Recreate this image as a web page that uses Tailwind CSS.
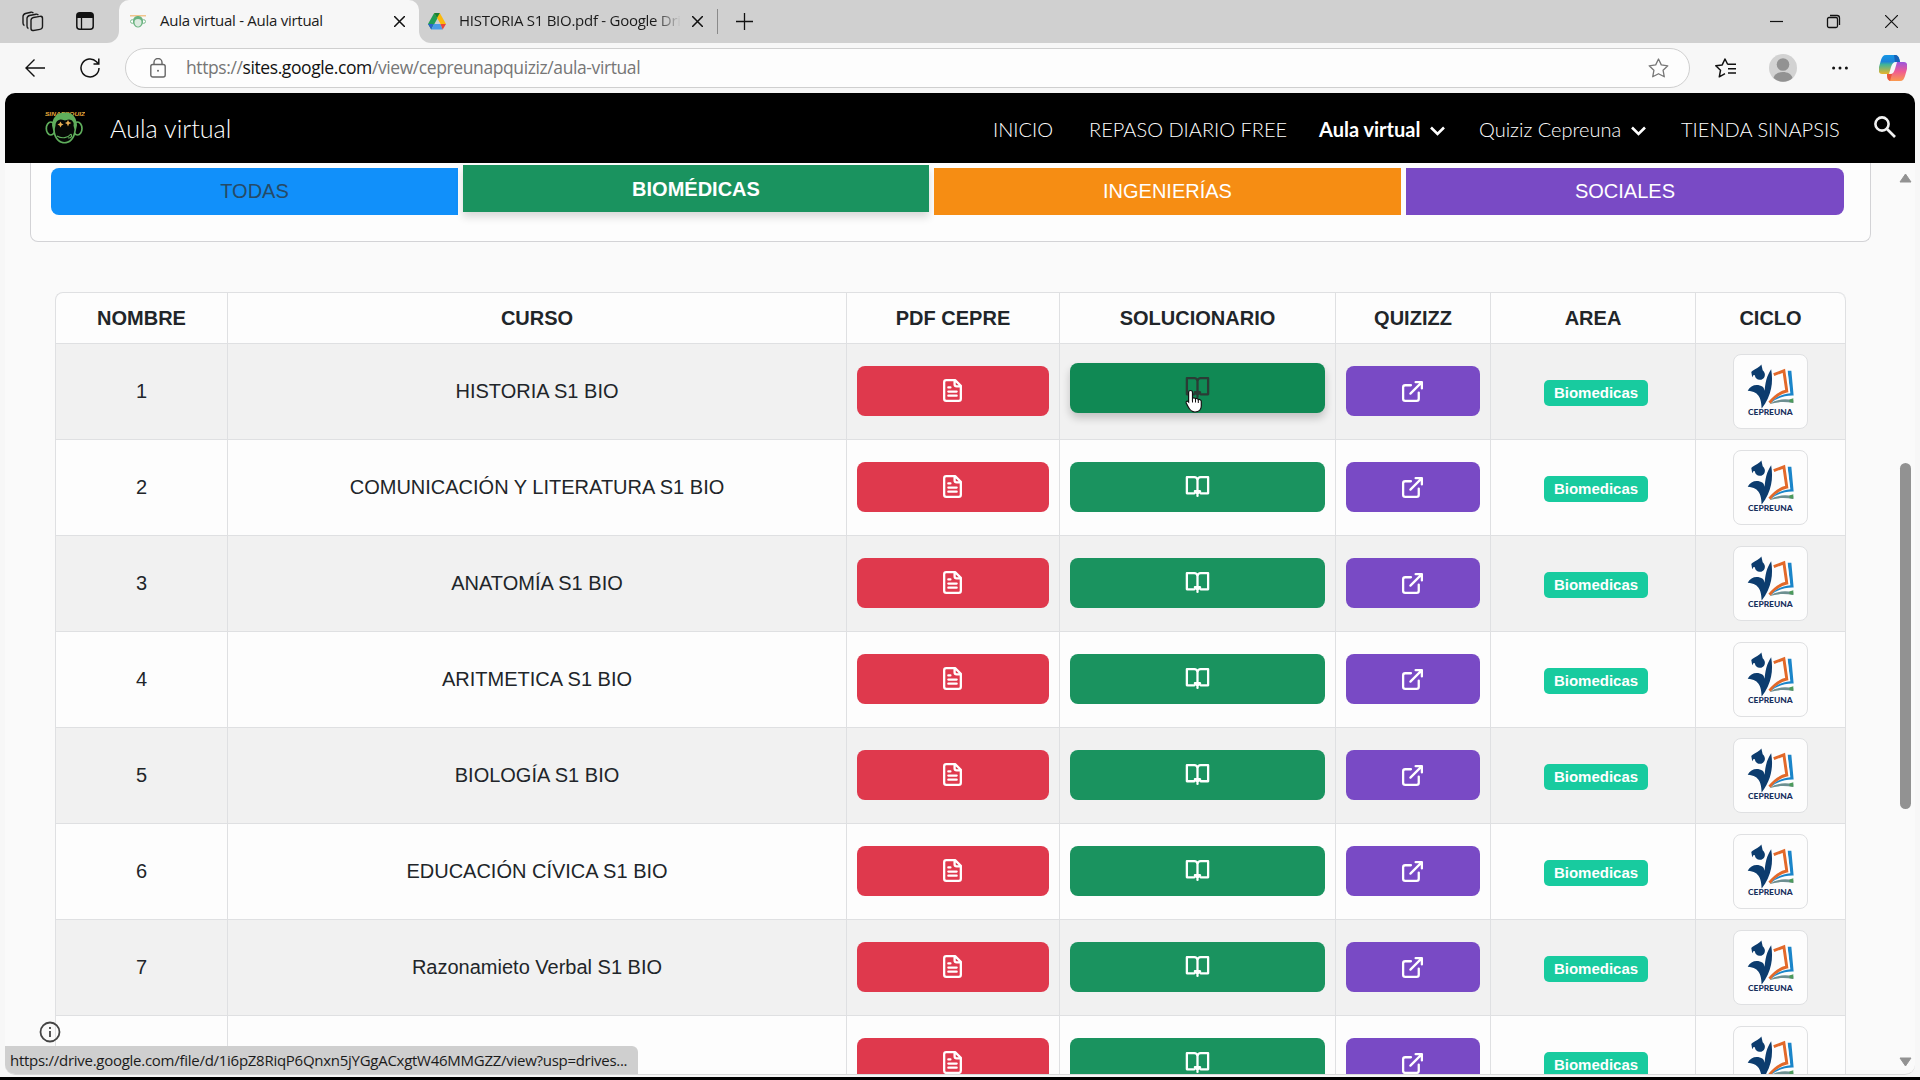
<!DOCTYPE html>
<html lang="es">
<head>
<meta charset="utf-8">
<title>Aula virtual - Aula virtual</title>
<script src="https://cdn.jsdelivr.net/npm/@tailwindcss/browser@4"></script>
</head>
<body class="w-[1920px] h-[1080px] overflow-hidden bg-[#f7f7f7] flex flex-col font-['Open_Sans',sans-serif] text-[#1b1b1b]">
<svg class="hidden">
  <symbol id="file" viewBox="0 0 24 24"><path d="M14.5 2H6a2 2 0 0 0-2 2v16a2 2 0 0 0 2 2h12a2 2 0 0 0 2-2V7.5L14.5 2zM14 2v4a2 2 0 0 0 2 2h4M10 9H8M16 13H8M16 17H8"/></symbol>
  <symbol id="book" viewBox="0 0 24 24"><path d="M12 21V6a3 3 0 0 0-3-3H1.800v15.500H9M12 6a3 3 0 0 1 3-3h7.200v15.500H15M9.500 16.500l2.500 2.500 2.500-2.500z"/></symbol>
  <symbol id="ext" viewBox="0 0 24 24"><path d="M18 13v6a2 2 0 0 1-2 2H5a2 2 0 0 1-2-2V8a2 2 0 0 1 2-2h5.500M15 3h6v6M10 14L21 3"/></symbol>
  <symbol id="drive" viewBox="0 0 18 17"><path d="M6.200 0H9L9.400 5.500 3.300 16.500 0 11z" fill="#1f9d55"/><path d="M6.200 0h5.600l6.200 11h-5.400z" fill="#fbb90c"/><path d="M6.200 0h5.600L9 5z" fill="#188038"/><path d="M3.300 16.500 0 11h5.400z" fill="#2b62c9"/><path d="M3.300 16.500 5.800 11h6.600l2.300 5.500z" fill="#4a9be8"/><path d="M12.400 11H18l-3.300 5.500z" fill="#e8453c"/></symbol>
  <symbol id="cepre" viewBox="100 42 224 223">
    <path d="M153 94c8-8 20-10 31-23l4 17c9 8 9 20 1 26-9 7-24 4-25-10l-4-1-4 7z" fill="#0c3c6e"/>
    <path d="M142 151c9-17 29-22 46-12 3 3 5 8 6 12 2-22 5-44 20-66 7 40 2 80-29 121-1-24-4-53-43-55z" fill="#0c3c6e"/>
    <path d="M222 102 253 90l9 62c-19 4-37 16-53 36" fill="none" stroke="#e2692a" stroke-width="9"/>
    <path d="M264 90l12 0 7 76c-25-1-50 7-68 21 14-18 34-26 58-28z" fill="#1b85c9"/>
    <path d="M263 88l7 66" stroke="#fff" stroke-width="2.500"/>
    <path d="M208 193c20-16 46-18 74-13v9c-27-5-50-4-74 4z" fill="#6d8f91"/><path d="M270 178l12-4v14l-12-2z" fill="#4c9a5b"/>
    <text x="211.500" y="225" text-anchor="middle" textLength="137" lengthAdjust="spacingAndGlyphs" font-family="Lato" font-weight="900" font-size="24" fill="#17305e">CEPREUNA</text>
  </symbol>
</svg>

<!-- tab strip -->
<div class="h-[43px] shrink-0 bg-[#f7f7f7] flex relative">
  <div class="w-[119px] bg-[#d0d0d0] rounded-br-[12px] flex items-center pl-[22px] gap-[32px]">
    <svg class="w-[22px] h-[22px]" viewBox="0 0 22 22" fill="none" stroke="#1b1b1b" stroke-width="1.400"><rect x="9" y="5.500" width="11.500" height="13" rx="2.500" transform="skewY(-10) translate(0 3)"/><path d="M6.500 17.500C5 17 5 16 5 15V7.500C5 6 6 5 7.500 4.500L14 3.200c1-.2 2 .2 2.300 1M2.500 14.500C1 14 1 13 1 12V5.500C1 4 2 3 3.500 2.500L9 1.200c1-.2 2 .2 2.300 1"/></svg>
    <svg class="w-[18px] h-[18px] -mt-px" viewBox="0 0 18 18"><rect x=".8" y=".8" width="16.400" height="16.400" rx="3" fill="none" stroke="#111" stroke-width="1.500"/><path d="M1 6V3a2 2 0 0 1 2-2h12a2 2 0 0 1 2 2v3z" fill="#111"/><path d="M5.500 5v12" stroke="#111" stroke-width="1.300"/></svg>
  </div>
  <div class="w-[300px] bg-[#d0d0d0]"><div class="w-full h-full bg-[#f7f7f7] rounded-t-[10px] flex items-center pl-[11px] pr-[14px]">
    <svg class="w-4 h-[13px] mr-[14px]" viewBox="0 0 16 13"><path d="M0 0h16v1.500H0z" fill="#f1c58d"/><circle cx="2.300" cy="6.500" r="1.800" fill="#fff" stroke="#78b98c"/><circle cx="13.700" cy="6.500" r="1.800" fill="#fff" stroke="#78b98c"/><path d="M3 6c0-4 3-5 5-5s5 1 5 5v2c-1 3-3 4.500-5 4.500S4 11 3 8z" fill="#6bb380"/><path d="M4.500 7c0-2 1.200-3 3.500-3s3.500 1 3.500 3-1 4.500-3.500 4.500S4.500 9 4.500 7z" fill="#dcebe0"/></svg>
    <span class="text-[15px] tracking-[-0.27px] whitespace-nowrap -mt-[3px]">Aula virtual - Aula virtual</span>
    <svg class="w-[11px] h-[11px] ml-auto" viewBox="0 0 10 10" stroke="#111" stroke-width="1.400"><path d="M0 0l10 10M10 0L0 10"/></svg>
  </div></div>
  <div class="flex-1 bg-[#d0d0d0] rounded-bl-[12px] flex items-center pl-[9px]">
    <svg class="w-[18px] h-[17px] mr-[13px]"><use href="#drive"/></svg>
    <div class="w-[222px] overflow-hidden [mask-image:linear-gradient(90deg,#000_88%,transparent)] -mt-[3px]"><span class="text-[15px] tracking-[-0.27px] whitespace-nowrap">HISTORIA S1 BIO.pdf - Google Drive</span></div>
    <svg class="w-[11px] h-[11px] ml-[11px]" viewBox="0 0 10 10" stroke="#111" stroke-width="1.400"><path d="M0 0l10 10M10 0L0 10"/></svg>
    <div class="w-px h-[25px] bg-[#8a8a8a] ml-[14px]"></div>
    <svg class="w-[17px] h-[17px] ml-[18px] -mt-px" viewBox="0 0 17 17" stroke="#111" stroke-width="1.300"><path d="M8.500 0v17M0 8.500h17"/></svg>
    <div class="ml-auto flex items-center gap-[44px] pr-[22px]">
      <svg class="w-[13px] h-[13px] -ml-px mr-px" viewBox="0 0 13 13" stroke="#111" stroke-width="1.200"><path d="M0 6.500h13"/></svg>
      <svg class="w-[13px] h-[13px] -ml-px mr-px overflow-visible" viewBox="0 0 13 13" fill="none" stroke="#111" stroke-width="1.300"><rect x=".5" y="2.500" width="10" height="10" rx="1.500"/><path d="M3 .5h7a2.500 2.500 0 0 1 2.500 2.500v7"/></svg>
      <svg class="w-[13px] h-[13px]" viewBox="0 0 13 13" stroke="#111" stroke-width="1.200"><path d="M0 0l13 13M13 0L0 13"/></svg>
    </div>
  </div>
</div>

<!-- address bar -->
<div class="h-[50px] shrink-0 flex items-center pl-[25px] pr-[13px]">
  <svg class="w-5 h-[18px] mr-[35px] -mt-px" viewBox="0 0 20 18" fill="none" stroke="#111" stroke-width="1.400"><path d="M20 9H1M9.500.5L1 9l8.500 8.500"/></svg>
  <svg class="w-5 h-5" viewBox="0 0 20 20" fill="none" stroke="#111" stroke-width="1.500"><path d="M19 10a9 9 0 1 1-2.500-6.300L18.500 6M18.800.5V6H13.500"/></svg>
  <div class="w-[1565px] h-10 ml-[25px] rounded-full border border-[#cfcfcf] bg-[#fdfdfd] flex items-center pl-[24px] pr-[20px]">
    <svg class="w-4 h-[20px] mr-[20px] -mt-px" viewBox="0 0 16 20" fill="none" stroke="#666" stroke-width="1.400"><rect x=".8" y="6.500" width="14.400" height="12.500" rx="2"/><path d="M4 6.500V4.500a4 4 0 0 1 8 0v2"/><circle cx="8" cy="12.700" r="1" fill="#666" stroke="none"/></svg>
    <span class="text-[17.500px] tracking-[-0.4px] whitespace-nowrap text-[#767676] -mt-[2px]">https://<span class="text-[#111]">sites.google.com</span>/view/cepreunapquiziz/aula-virtual</span>
    <svg class="w-[21px] h-[20px] ml-auto" viewBox="0 0 21 20" fill="none" stroke="#777" stroke-width="1.300" stroke-linejoin="round"><path d="M10.500 1l2.800 5.900 6.500.9-4.700 4.500 1.200 6.500-5.800-3.100-5.800 3.100 1.200-6.500L1.200 7.800l6.500-.9z"/></svg>
  </div>
  <svg class="w-[21px] h-[20px] ml-[25px]" viewBox="0 0 21 20" fill="none" stroke="#111" stroke-width="1.500" stroke-linejoin="round"><path d="M13 6.200L12.500 6 10 1 7.200 6.900.8 7.800l4.700 4.500-1.200 6.500L10 15.700M13 6.200h8M13 10.700h8M13 15h8"/></svg>
  <svg class="w-7 h-7 ml-[33px]" viewBox="0 0 28 28"><circle cx="14" cy="14" r="14" fill="#d2d2d2"/><circle cx="14" cy="10.500" r="6.300" fill="#929292"/><path d="M4.500 24c1-4 5-6 9.500-6s8.500 2 9.500 6a14 14 0 0 1-19 0z" fill="#929292"/></svg>
  <svg class="w-4 h-1 ml-[35px]" viewBox="0 0 16 4" fill="#111"><circle cx="1.600" cy="2" r="1.500"/><circle cx="8" cy="2" r="1.500"/><circle cx="14.400" cy="2" r="1.500"/></svg>
  <svg class="w-[28px] h-[26px] ml-auto" viewBox="0 0 28 26">
    <defs><linearGradient id="c1" x2="0" y2="1"><stop stop-color="#1597e5"/><stop offset=".35" stop-color="#1d83d8"/><stop offset=".5" stop-color="#3fb39a"/><stop offset="1" stop-color="#e9b52b"/></linearGradient><linearGradient id="c2" x2="0" y2="1"><stop stop-color="#9a55dd"/><stop offset=".5" stop-color="#ef5b93"/><stop offset="1" stop-color="#fa9a4e"/></linearGradient></defs>
    <path d="M7 0h9c3 0 4 2 5 7h-4c-3 0-4 2-5 5l-2 7H3c-3 0-4-3-3-7L2 5c1-3 2-5 5-5z" fill="url(#c1)"/>
    <path d="M21 26h-9c-3 0-4-2-4-7h3c3 0 4-2 5-5l2-7h7c3 0 4 3 3 7l-2 7c-1 3-2 5-5 5z" fill="url(#c2)"/><path d="M8 19h5l-2 7c-2-1-3-3-3-7z" fill="#e8563c"/><path d="M15 0h1c3 0 4 2 5 7h-5z" fill="#1763b8"/>
  </svg>
</div>

<!-- page viewport -->
<div class="mx-[5px] h-[982px] shrink-0 rounded-[10px] overflow-hidden bg-[#fafafa] border-b border-[#dadada] relative flex flex-col">
  <header class="h-[70px] shrink-0 bg-black flex items-center pl-[40px] font-['Lato',sans-serif] text-white whitespace-nowrap">
    <svg class="w-10 h-[34px] -mt-px" viewBox="0 0 40 34"><text x="0" y="5" font-family="Liberation Sans" font-weight="700" font-style="italic" font-size="6" textLength="40" lengthAdjust="spacingAndGlyphs" fill="#e8a93a">SINAPSQUIZ</text><ellipse cx="5.800" cy="17.500" rx="4.500" ry="6.500" fill="none" stroke="#5fae5c" stroke-width="1.700"/><ellipse cx="32.500" cy="17.500" rx="4.500" ry="6.500" fill="none" stroke="#5fae5c" stroke-width="1.700"/><path d="M7 14C8 4 14 1.500 20 1.500S31 4 32 14l-2 10c-2 6-6 8.500-10.500 8.500S11 30 9 24z" fill="#5fae5c"/><path d="M10.500 14.500c0-4 3-6 5.500-6 2 0 3 1 4 1s2-1 4-1c3 0 5.500 3 4.500 6l1 4c-1 9-6 12.500-10 12.500S9.800 27 9.800 18z" fill="#050805"/><path d="M15.500 10.500l1 2 2 1-2 1-1 2-1-2-2-1 2-1zM23 9l1 2 2.500 1-2.500 1-1 2.500-1-2.500-2-1 2-1z" fill="#e8b053"/><path d="M12 25c5 3 11 2 14-2M23 27c4 0 4-2 3-4" fill="none" stroke="#5fae5c" stroke-width="1.200"/></svg>
    <span class="ml-[25px] w-[882px] pt-px text-[25.200px] font-light">Aula virtual</span>
    <nav class="flex items-center text-[20px] font-light pt-px">
      <span class="w-[96px] pl-px">INICIO</span>
      <span class="w-[231px] pl-px">REPASO DIARIO FREE</span>
      <span class="w-[160px] flex items-center justify-between pr-[34px]"><span class="font-bold">Aula virtual</span><svg class="w-[15px] h-[10px] mt-1" viewBox="0 0 15 10" fill="none" stroke="#fff" stroke-width="2.600"><path d="M1 1.500l6.500 6.500L14 1.500"/></svg></span>
      <span class="w-[202px] flex items-center justify-between pr-[35px]"><span>Quiziz Cepreuna</span><svg class="w-[15px] h-[10px] mt-1" viewBox="0 0 15 10" fill="none" stroke="#fff" stroke-width="2.600"><path d="M1 1.500l6.500 6.500L14 1.500"/></svg></span>
      <span class="w-[193px] tracking-[0.02px]">TIENDA SINAPSIS</span>
      <svg class="w-[22px] h-[22px] -mt-[3px]" viewBox="0 0 22 22" fill="none" stroke="#f1f1f1" stroke-width="2.600"><circle cx="8" cy="8" r="6.600"/><path d="M13 13l8 8"/></svg>
    </nav>
  </header>

  <div class="ml-[25px] w-[1841px] h-[79px] shrink-0 bg-[#fdfdfd] border border-t-0 border-[#d3d3d6] rounded-b-lg flex gap-[5px] pl-[20px] pt-[5px] font-['Liberation_Sans',Arial,sans-serif] text-[20px]">
    <div class="w-[407px] h-[47px] bg-[#1190fa] text-[#264a66] rounded-l-lg flex items-center justify-center pb-[2px]">TODAS</div>
    <div class="w-[466px] h-[47px] -mt-[3px] bg-[#1a935f] text-white font-bold shadow-[0_5px_8px_rgba(0,0,0,0.15)] flex items-center justify-center">BIOMÉDICAS</div>
    <div class="w-[467px] h-[47px] bg-[#f68d13] text-white flex items-center justify-center pb-[2px]">INGENIERÍAS</div>
    <div class="w-[438px] h-[47px] bg-[#794ac5] text-white rounded-r-lg flex items-center justify-center pb-[2px]">SOCIALES</div>
  </div>

  <table class="ml-[50px] mt-[50px] w-[1791px] shrink-0 table-fixed border-separate border-spacing-0 border-l border-t border-[#dfe0e2] rounded-t-lg bg-[#fdfdfd] font-['Liberation_Sans',Arial,sans-serif] text-[20px] text-[#212529] text-center">
    <colgroup><col class="w-[172px]"><col class="w-[619px]"><col class="w-[213px]"><col class="w-[276px]"><col class="w-[155px]"><col class="w-[205px]"><col class="w-[150px]"></colgroup>
    <thead><tr class="h-[51px] [&>th]:border-r [&>th]:border-b [&>th]:border-[#dfe0e2] [&>th]:pt-0 [&>th]:pb-px"><th>NOMBRE</th><th>CURSO</th><th>PDF CEPRE</th><th>SOLUCIONARIO</th><th>QUIZIZZ</th><th>AREA</th><th class="rounded-tr-lg">CICLO</th></tr></thead>
    <tbody id="rows"></tbody>
  </table>

  <!-- scrollbar -->
  <svg class="absolute left-[1894px] top-[80px] w-[13px] h-[10px]" viewBox="0 0 13 10" fill="#929292" stroke="#929292" stroke-linejoin="round"><path d="M6.500 1L12 9H1z"/></svg>
  <div class="absolute left-[1895px] top-[370px] w-[11px] h-[346px] rounded-full bg-[#929292]"></div>
  <svg class="absolute left-[1894px] top-[964px] w-[13px] h-[10px]" viewBox="0 0 13 10" fill="#929292" stroke="#929292" stroke-linejoin="round"><path d="M6.500 9L12 1H1z"/></svg>

  <svg class="absolute left-[34px] top-[928px] w-[22px] h-[22px]" viewBox="0 0 22 22" fill="none" stroke="#444" stroke-width="1.800"><circle cx="11" cy="11" r="9.500"/><path d="M11 10v6M11 6v2"/></svg>
  <div class="absolute left-0 top-[953px] w-[633px] h-[29px] rounded-tr-md bg-[#cfcfcf] pl-[5px] flex items-center"><span class="text-[15px] tracking-[-0.27px] whitespace-nowrap">https://drive.google.com/file/d/1i6pZ8RiqP6Qnxn5jYGgACxgtW46MMGZZ/view?usp=drives...</span></div>

  <!-- pointer -->
  <svg class="absolute left-[1180px] top-[296px] w-[18px] h-[24px]" viewBox="0 0 18 24"><path d="M5.500 1.500c1.300 0 2 .8 2 2v6c.6-1 2.600-.9 3 .4.800-.8 2.500-.4 2.800.8 1-.6 3 0 3 1.800V17c0 3-2 6-6.300 6-4 0-5.500-2.500-7-5.500L1.200 14c-.5-1.500 1-2.600 2.400-1V3.500c0-1.200.7-2 1.900-2z" fill="#fff" stroke="#111" stroke-width="1.200"/><path d="M7.500 9.500v4M10.500 10v3.500M13.300 11v3" stroke="#111" stroke-width="1"/></svg>
</div>
<div class="h-[2px] shrink-0"></div>
<div class="h-[3px] shrink-0 bg-black"></div>

<script>
const cursos = ['HISTORIA S1 BIO','COMUNICACIÓN Y LITERATURA S1 BIO','ANATOMÍA S1 BIO','ARITMETICA S1 BIO','BIOLOGÍA S1 BIO','EDUCACIÓN CÍVICA S1 BIO','Razonamieto Verbal S1 BIO',''];
const btn = (icon, size, cls) => `<div class="h-[50px] mx-[10px] mb-[2px] rounded-lg flex items-center justify-center ${cls}"><svg class="${size} fill-none stroke-current stroke-[2.2] [stroke-linecap:round] [stroke-linejoin:round]"><use href="#${icon}"/></svg></div>`;
document.getElementById('rows').innerHTML = cursos.map((c, i) => `
<tr class="h-[96px] ${i % 2 ? 'bg-[#fdfdfd]' : 'bg-[#f1f1f1]'} [&>td]:border-r [&>td]:border-b [&>td]:border-[#dfe0e2] [&>td]:p-0">
<td><div class="pb-[2px]">${c ? i + 1 : ''}</div></td><td><div class="pb-[2px]">${c}</div></td>
<td>${btn('file', 'w-[25px] h-[25px] mr-px', 'bg-[#df394d] text-white')}</td>
<td>${btn('book', 'w-[25px] h-[25px] mr-px', i ? 'bg-[#1a935f] text-white' : 'bg-[#108954] text-[#2b3b35] relative -top-[3px] shadow-[0_5px_8px_rgba(0,0,0,0.2)]')}</td>
<td>${btn('ext', 'w-[25px] h-[25px] mr-px mt-[2px]', 'bg-[#794ac5] text-white')}</td>
<td><div class="w-[104px] h-[26px] ml-[53px] mt-[3px] rounded-[5px] bg-[#18cb9f] text-white font-bold text-[15px] leading-[26px]">Biomedicas</div></td>
<td><div class="w-[75px] h-[75px] mx-auto rounded-lg border border-[#dfe0e2] bg-[#fdfdfd]"><svg class="w-full h-full"><use href="#cepre"/></svg></div></td></tr>`).join('');
</script>
</body>
</html>
